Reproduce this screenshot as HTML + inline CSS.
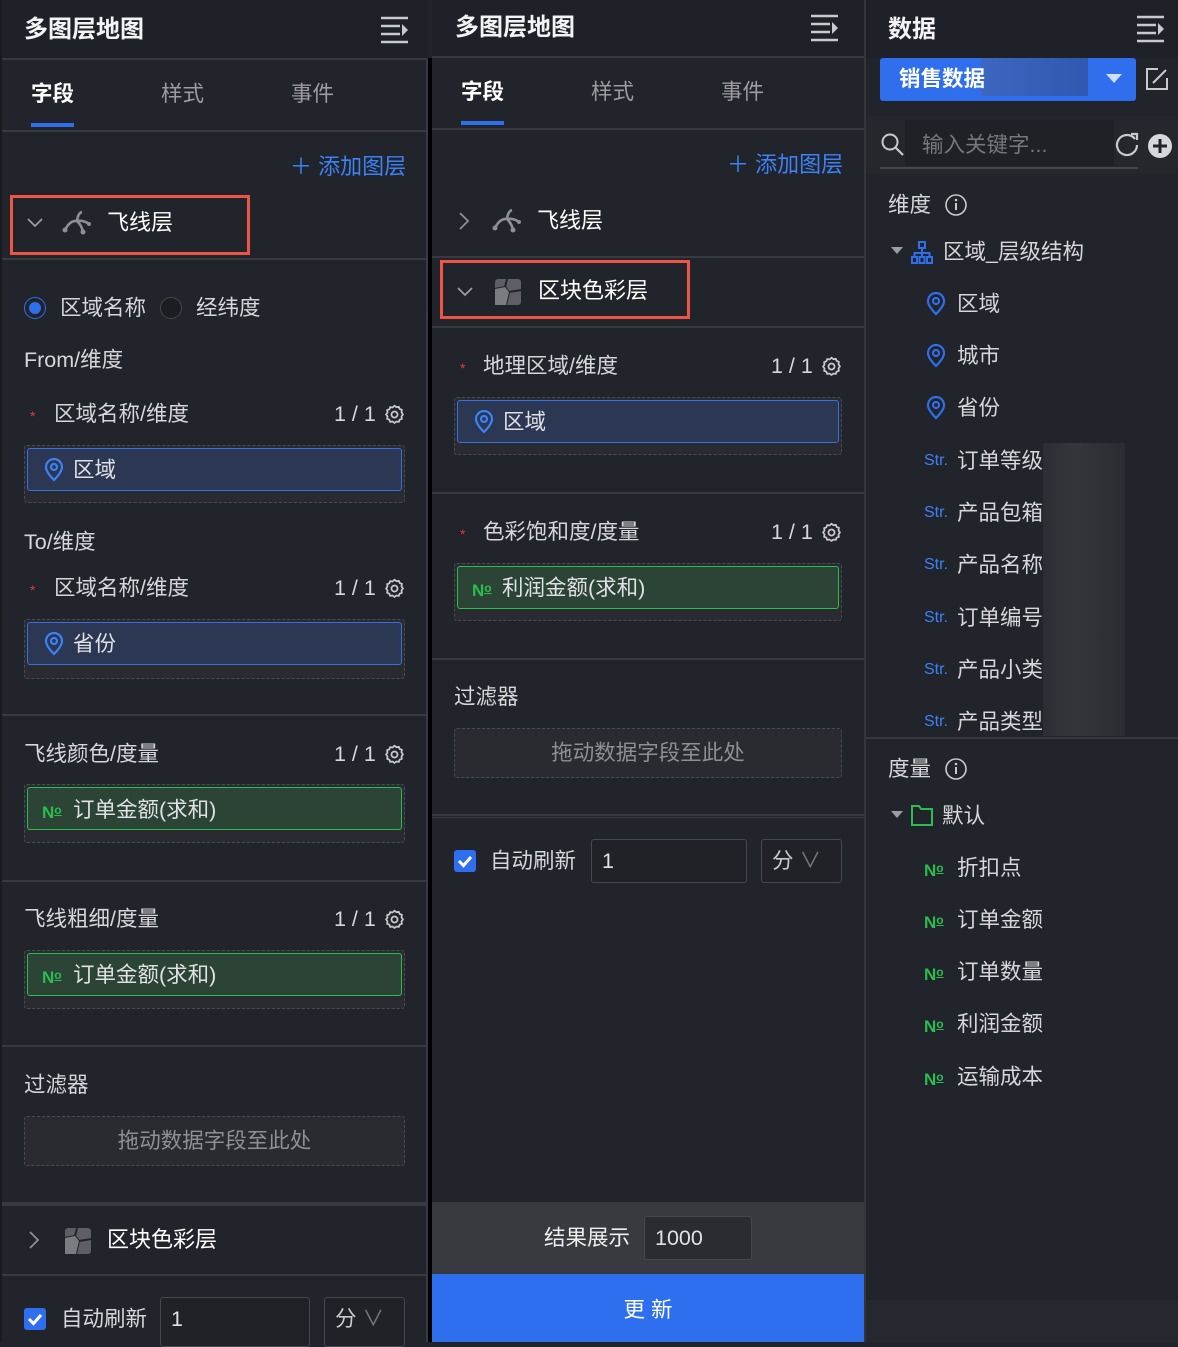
<!DOCTYPE html>
<html><head><meta charset="utf-8">
<style>
*{margin:0;padding:0;box-sizing:border-box}
body{width:1178px;height:1342px;background:#22242b;position:relative;overflow:hidden;font-family:"Liberation Sans","Noto Sans CJK SC",sans-serif;color:#d6d7da;font-size:21.5px}
.a{position:absolute}
.t{position:absolute;line-height:28px;white-space:nowrap}
.hd{position:absolute;top:0;height:58px;background:#1f2128}
.ln{position:absolute;height:2px;background:#383a41}
.w{color:#f2f3f5;font-size:24px;font-weight:bold}
.tab{font-size:21.5px;color:#9b9da2}
.tab.on{color:#fff;font-weight:bold}
.ul{position:absolute;height:4px;background:#2f6fed}
.dz{position:absolute;border:1px dashed #4a4c52;background:#2a2b30;border-radius:3px}
.pill{position:absolute;border-radius:3px;height:43px}
.pb{background:#2c3754;border:1.5px solid #3570e6}
.pg{background:#2c4436;border:1.5px solid #2bbd4f}
.red{color:#e23b3b;font-size:14px}
.drop{position:absolute;border:1px dashed #4a4c52;background:#2a2b30;border-radius:3px;color:#8d8f94;text-align:center;line-height:48px}
.inp{position:absolute;border:1px solid #46484e;border-radius:3px;background:#202227;color:#e0e1e4;padding-left:10px;line-height:42px}
.cb{position:absolute;width:22px;height:22px;background:#2f6fed;border-radius:3px}
.no{color:#2bbd4f;font-weight:bold;font-size:17px}
.no i{font-style:normal;font-size:12px;text-decoration:underline;vertical-align:4px}
.str{color:#3b82f6;font-size:16px}
.blue{color:#3b82f6}
</style></head><body>

<!-- Column 1 -->
<div class="a" style="left:0;top:0;width:2px;height:1342px;background:#1a1b20"></div>
<div class="hd" style="left:2px;width:426px"></div>
<div class="a" style="left:426px;top:58px;width:2px;height:1284px;background:#383a41"></div>
<div class="a" style="left:428px;top:58px;width:4px;height:1284px;background:#000"></div>
<div class="t w" style="left:24px;top:16px">多图层地图</div>
<svg class="a" style="left:380px;top:16px" width="30" height="28" viewBox="0 0 30 28"><g stroke="#c9cacd" stroke-width="2.5"><line x1="1" y1="2" x2="28" y2="2"/><line x1="1" y1="10" x2="20" y2="10"/><line x1="1" y1="18" x2="20" y2="18"/><line x1="1" y1="26" x2="28" y2="26"/></g><path d="M22 8 L28 14 L22 20Z" fill="#c9cacd"/></svg>
<div class="ln" style="left:2px;top:58px;width:426px"></div>
<div class="t tab on" style="left:31px;top:80px">字段</div>
<div class="t tab" style="left:161px;top:80px">样式</div>
<div class="t tab" style="left:291px;top:80px">事件</div>
<div class="ul" style="left:31px;top:123px;width:43px"></div>
<div class="ln" style="left:2px;top:130px;width:426px"></div>
<div class="t blue" style="left:290px;top:153px;font-size:22px">＋ 添加图层</div>
<div class="a" style="left:10px;top:195px;width:240px;height:60px;border:3px solid #ee5544"></div>
<svg class="a" style="left:26px;top:214px" width="18" height="18"><path d="M2 5 L9 12 L16 5" stroke="#9b9da2" stroke-width="1.8" fill="none"/></svg>
<svg class="a" style="left:62px;top:208px" width="32" height="28" viewBox="0 0 32 28"><path d="M3 22 Q8 12 15 13" stroke="#8d8f94" stroke-width="2.6" fill="none"/><path d="M15 13 Q16 5 20 4" stroke="#8d8f94" stroke-width="2.6" fill="none"/><path d="M15 13 Q22 12 27 16" stroke="#8d8f94" stroke-width="2.6" fill="none"/><path d="M15 13 Q20 18 21 24" stroke="#8d8f94" stroke-width="2.6" fill="none"/><circle cx="3" cy="22" r="2.5" fill="#8d8f94"/><circle cx="21" cy="24" r="2.5" fill="#8d8f94"/><circle cx="27" cy="16" r="2" fill="#8d8f94"/></svg>
<div class="t" style="left:107px;top:209px;color:#fff;font-size:22px">飞线层</div>
<div class="ln" style="left:2px;top:258px;width:426px"></div>

<div class="a" style="left:24px;top:297px;width:22px;height:22px;border:1.5px solid #2f6fed;border-radius:50%"></div>
<div class="a" style="left:29px;top:302px;width:12px;height:12px;background:#2f6fed;border-radius:50%"></div>
<div class="t" style="left:60px;top:294px">区域名称</div>
<div class="a" style="left:160px;top:297px;width:22px;height:22px;border:1.5px solid #45474d;border-radius:50%;background:#1c1d21"></div>
<div class="t" style="left:196px;top:294px">经纬度</div>
<div class="t" style="left:24px;top:346px">From/维度</div>
<div class="t red" style="left:30px;top:402px">*</div>
<div class="t" style="left:54px;top:400px">区域名称/维度</div>
<div class="t" style="left:334px;top:400px">1 / 1</div>
<svg class="a" style="left:384px;top:404px" width="21" height="21" viewBox="0 0 24 24"><path d="M12 2l2.2 1.6 2.7-.4 1 2.5 2.5 1-.4 2.7L21.6 12l-1.6 2.2.4 2.7-2.5 1-1 2.5-2.7-.4L12 21.6l-2.2-1.6-2.7.4-1-2.5-2.5-1 .4-2.7L2.4 12 4 9.8l-.4-2.7 2.5-1 1-2.5 2.7.4z" fill="none" stroke="#c9cacd" stroke-width="2"/><circle cx="12" cy="12" r="3.5" fill="none" stroke="#c9cacd" stroke-width="2"/></svg>
<div class="dz" style="left:24px;top:445px;width:381px;height:58px"></div>
<div class="pill pb" style="left:27px;top:448px;width:375px"></div>
<svg class="a" style="left:44px;top:458px" width="20" height="24" viewBox="0 0 20 24"><path d="M10 22 C4 16 2 12 2 9 A8 8 0 0 1 18 9 C18 12 16 16 10 22Z" fill="none" stroke="#3b82f6" stroke-width="2.2"/><circle cx="10" cy="9" r="3" fill="none" stroke="#3b82f6" stroke-width="2.2"/></svg>
<div class="t" style="left:73px;top:456px;color:#e0e1e4">区域</div>

<div class="t" style="left:24px;top:528px">To/维度</div>
<div class="t red" style="left:30px;top:576px">*</div>
<div class="t" style="left:54px;top:574px">区域名称/维度</div>
<div class="t" style="left:334px;top:574px">1 / 1</div>
<svg class="a" style="left:384px;top:578px" width="21" height="21" viewBox="0 0 24 24"><path d="M12 2l2.2 1.6 2.7-.4 1 2.5 2.5 1-.4 2.7L21.6 12l-1.6 2.2.4 2.7-2.5 1-1 2.5-2.7-.4L12 21.6l-2.2-1.6-2.7.4-1-2.5-2.5-1 .4-2.7L2.4 12 4 9.8l-.4-2.7 2.5-1 1-2.5 2.7.4z" fill="none" stroke="#c9cacd" stroke-width="2"/><circle cx="12" cy="12" r="3.5" fill="none" stroke="#c9cacd" stroke-width="2"/></svg>
<div class="dz" style="left:24px;top:619px;width:381px;height:60px"></div>
<div class="pill pb" style="left:27px;top:622px;width:375px"></div>
<svg class="a" style="left:44px;top:632px" width="20" height="24" viewBox="0 0 20 24"><path d="M10 22 C4 16 2 12 2 9 A8 8 0 0 1 18 9 C18 12 16 16 10 22Z" fill="none" stroke="#3b82f6" stroke-width="2.2"/><circle cx="10" cy="9" r="3" fill="none" stroke="#3b82f6" stroke-width="2.2"/></svg>
<div class="t" style="left:73px;top:630px;color:#e0e1e4">省份</div>
<div class="ln" style="left:2px;top:714px;width:426px"></div>

<div class="t" style="left:24px;top:740px">飞线颜色/度量</div>
<div class="t" style="left:334px;top:740px">1 / 1</div>
<svg class="a" style="left:384px;top:744px" width="21" height="21" viewBox="0 0 24 24"><path d="M12 2l2.2 1.6 2.7-.4 1 2.5 2.5 1-.4 2.7L21.6 12l-1.6 2.2.4 2.7-2.5 1-1 2.5-2.7-.4L12 21.6l-2.2-1.6-2.7.4-1-2.5-2.5-1 .4-2.7L2.4 12 4 9.8l-.4-2.7 2.5-1 1-2.5 2.7.4z" fill="none" stroke="#c9cacd" stroke-width="2"/><circle cx="12" cy="12" r="3.5" fill="none" stroke="#c9cacd" stroke-width="2"/></svg>
<div class="dz" style="left:24px;top:784px;width:381px;height:59px"></div>
<div class="pill pg" style="left:27px;top:787px;width:375px"></div>
<div class="t no" style="left:42px;top:796px">N<i>o</i></div>
<div class="t" style="left:73px;top:796px;color:#e0e1e4">订单金额(求和)</div>
<div class="ln" style="left:2px;top:880px;width:426px"></div>

<div class="t" style="left:24px;top:905px">飞线粗细/度量</div>
<div class="t" style="left:334px;top:905px">1 / 1</div>
<svg class="a" style="left:384px;top:909px" width="21" height="21" viewBox="0 0 24 24"><path d="M12 2l2.2 1.6 2.7-.4 1 2.5 2.5 1-.4 2.7L21.6 12l-1.6 2.2.4 2.7-2.5 1-1 2.5-2.7-.4L12 21.6l-2.2-1.6-2.7.4-1-2.5-2.5-1 .4-2.7L2.4 12 4 9.8l-.4-2.7 2.5-1 1-2.5 2.7.4z" fill="none" stroke="#c9cacd" stroke-width="2"/><circle cx="12" cy="12" r="3.5" fill="none" stroke="#c9cacd" stroke-width="2"/></svg>
<div class="dz" style="left:24px;top:950px;width:381px;height:59px"></div>
<div class="pill pg" style="left:27px;top:953px;width:375px"></div>
<div class="t no" style="left:42px;top:961px">N<i>o</i></div>
<div class="t" style="left:73px;top:961px;color:#e0e1e4">订单金额(求和)</div>
<div class="ln" style="left:2px;top:1045px;width:426px"></div>

<div class="t" style="left:24px;top:1071px">过滤器</div>
<div class="drop" style="left:24px;top:1116px;width:381px;height:50px">拖动数据字段至此处</div>
<div class="a" style="left:2px;top:1202px;width:426px;height:4px;background:#383a41"></div>
<svg class="a" style="left:26px;top:1230px" width="16" height="20"><path d="M4 2 L12 10 L4 18" stroke="#8d8f94" stroke-width="1.8" fill="none"/></svg>
<svg class="a" style="left:64px;top:1227px" width="28" height="28" viewBox="0 0 28 28"><rect x="1" y="1" width="26" height="26" rx="3" fill="#5d5f64"/><path d="M13 1 L11 9 L1 11 M11 9 L15 14 L12 27 M15 14 L27 12" stroke="#22242b" stroke-width="2" fill="none"/><path d="M1 11 L11 9 L15 14 L12 27 L1 27Z" fill="#7a7c81"/></svg>
<div class="t" style="left:107px;top:1226px;color:#fff;font-size:22px">区块色彩层</div>
<div class="ln" style="left:2px;top:1274px;width:426px"></div>
<div class="cb" style="left:24px;top:1308px"></div>
<svg class="a" style="left:24px;top:1308px" width="22" height="22"><path d="M5 11 L9.5 15.5 L17 7" stroke="#fff" stroke-width="3" fill="none"/></svg>
<div class="t" style="left:61px;top:1305px">自动刷新</div>
<div class="inp" style="left:160px;top:1297px;width:150px;height:50px">1</div>
<div class="inp" style="left:324px;top:1297px;width:81px;height:50px;color:#c9cacd">分 <span style="color:#777">∨</span></div>

<!-- Column 2 -->
<div class="hd" style="left:432px;width:432px;height:56px"></div>
<div class="a" style="left:864px;top:0;width:2px;height:1342px;background:#34363c"></div>
<div class="t w" style="left:455px;top:14px">多图层地图</div>
<svg class="a" style="left:810px;top:14px" width="30" height="28" viewBox="0 0 30 28"><g stroke="#c9cacd" stroke-width="2.5"><line x1="1" y1="2" x2="28" y2="2"/><line x1="1" y1="10" x2="20" y2="10"/><line x1="1" y1="18" x2="20" y2="18"/><line x1="1" y1="26" x2="28" y2="26"/></g><path d="M22 8 L28 14 L22 20Z" fill="#c9cacd"/></svg>
<div class="ln" style="left:432px;top:56px;width:432px"></div>
<div class="t tab on" style="left:461px;top:78px">字段</div>
<div class="t tab" style="left:591px;top:78px">样式</div>
<div class="t tab" style="left:721px;top:78px">事件</div>
<div class="ul" style="left:461px;top:121px;width:43px"></div>
<div class="ln" style="left:432px;top:128px;width:432px"></div>
<div class="t blue" style="left:727px;top:151px;font-size:22px">＋ 添加图层</div>
<svg class="a" style="left:456px;top:211px" width="16" height="20"><path d="M4 2 L12 10 L4 18" stroke="#8d8f94" stroke-width="1.8" fill="none"/></svg>
<svg class="a" style="left:492px;top:206px" width="32" height="28" viewBox="0 0 32 28"><path d="M3 22 Q8 12 15 13" stroke="#8d8f94" stroke-width="2.6" fill="none"/><path d="M15 13 Q16 5 20 4" stroke="#8d8f94" stroke-width="2.6" fill="none"/><path d="M15 13 Q22 12 27 16" stroke="#8d8f94" stroke-width="2.6" fill="none"/><path d="M15 13 Q20 18 21 24" stroke="#8d8f94" stroke-width="2.6" fill="none"/><circle cx="3" cy="22" r="2.5" fill="#8d8f94"/><circle cx="21" cy="24" r="2.5" fill="#8d8f94"/><circle cx="27" cy="16" r="2" fill="#8d8f94"/></svg>
<div class="t" style="left:537px;top:207px;color:#fff;font-size:22px">飞线层</div>
<div class="ln" style="left:432px;top:256px;width:432px"></div>
<div class="a" style="left:440px;top:260px;width:250px;height:59px;border:3px solid #ee5544"></div>
<svg class="a" style="left:456px;top:283px" width="18" height="18"><path d="M2 5 L9 12 L16 5" stroke="#9b9da2" stroke-width="1.8" fill="none"/></svg>
<svg class="a" style="left:494px;top:278px" width="28" height="28" viewBox="0 0 28 28"><rect x="1" y="1" width="26" height="26" rx="3" fill="#5d5f64"/><path d="M13 1 L11 9 L1 11 M11 9 L15 14 L12 27 M15 14 L27 12" stroke="#22242b" stroke-width="2" fill="none"/><path d="M1 11 L11 9 L15 14 L12 27 L1 27Z" fill="#7a7c81"/></svg>
<div class="t" style="left:538px;top:277px;color:#fff;font-size:22px">区块色彩层</div>
<div class="ln" style="left:432px;top:326px;width:432px"></div>

<div class="t red" style="left:460px;top:354px">*</div>
<div class="t" style="left:483px;top:352px">地理区域/维度</div>
<div class="t" style="left:771px;top:352px">1 / 1</div>
<svg class="a" style="left:821px;top:356px" width="21" height="21" viewBox="0 0 24 24"><path d="M12 2l2.2 1.6 2.7-.4 1 2.5 2.5 1-.4 2.7L21.6 12l-1.6 2.2.4 2.7-2.5 1-1 2.5-2.7-.4L12 21.6l-2.2-1.6-2.7.4-1-2.5-2.5-1 .4-2.7L2.4 12 4 9.8l-.4-2.7 2.5-1 1-2.5 2.7.4z" fill="none" stroke="#c9cacd" stroke-width="2"/><circle cx="12" cy="12" r="3.5" fill="none" stroke="#c9cacd" stroke-width="2"/></svg>
<div class="dz" style="left:454px;top:397px;width:388px;height:58px"></div>
<div class="pill pb" style="left:457px;top:400px;width:382px"></div>
<svg class="a" style="left:474px;top:410px" width="20" height="24" viewBox="0 0 20 24"><path d="M10 22 C4 16 2 12 2 9 A8 8 0 0 1 18 9 C18 12 16 16 10 22Z" fill="none" stroke="#3b82f6" stroke-width="2.2"/><circle cx="10" cy="9" r="3" fill="none" stroke="#3b82f6" stroke-width="2.2"/></svg>
<div class="t" style="left:503px;top:408px;color:#e0e1e4">区域</div>
<div class="ln" style="left:432px;top:492px;width:432px"></div>

<div class="t red" style="left:460px;top:520px">*</div>
<div class="t" style="left:483px;top:518px">色彩饱和度/度量</div>
<div class="t" style="left:771px;top:518px">1 / 1</div>
<svg class="a" style="left:821px;top:522px" width="21" height="21" viewBox="0 0 24 24"><path d="M12 2l2.2 1.6 2.7-.4 1 2.5 2.5 1-.4 2.7L21.6 12l-1.6 2.2.4 2.7-2.5 1-1 2.5-2.7-.4L12 21.6l-2.2-1.6-2.7.4-1-2.5-2.5-1 .4-2.7L2.4 12 4 9.8l-.4-2.7 2.5-1 1-2.5 2.7.4z" fill="none" stroke="#c9cacd" stroke-width="2"/><circle cx="12" cy="12" r="3.5" fill="none" stroke="#c9cacd" stroke-width="2"/></svg>
<div class="dz" style="left:454px;top:563px;width:388px;height:58px"></div>
<div class="pill pg" style="left:457px;top:566px;width:382px"></div>
<div class="t no" style="left:472px;top:574px">N<i>o</i></div>
<div class="t" style="left:502px;top:574px;color:#e0e1e4">利润金额(求和)</div>
<div class="ln" style="left:432px;top:658px;width:432px"></div>

<div class="t" style="left:454px;top:683px">过滤器</div>
<div class="drop" style="left:454px;top:728px;width:388px;height:50px">拖动数据字段至此处</div>
<div class="ln" style="left:432px;top:814px;width:432px"></div>
<div class="a" style="left:432px;top:817px;width:432px;height:1px;background:#383a41"></div>
<div class="cb" style="left:454px;top:850px"></div>
<svg class="a" style="left:454px;top:850px" width="22" height="22"><path d="M5 11 L9.5 15.5 L17 7" stroke="#fff" stroke-width="3" fill="none"/></svg>
<div class="t" style="left:490px;top:847px">自动刷新</div>
<div class="inp" style="left:591px;top:839px;width:156px;height:44px">1</div>
<div class="inp" style="left:761px;top:839px;width:81px;height:44px;color:#c9cacd">分 <span style="color:#777">∨</span></div>

<div class="a" style="left:432px;top:1202px;width:432px;height:72px;background:#383a40"></div>
<div class="t" style="left:544px;top:1224px;color:#eee">结果展示</div>
<div class="inp" style="left:644px;top:1216px;width:108px;height:44px;background:#2a2c31">1000</div>
<div class="a" style="left:432px;top:1274px;width:432px;height:68px;background:#2e6ff0"></div>
<div class="t" style="left:432px;top:1296px;width:432px;text-align:center;color:#fff">更 新</div>

<!-- Column 3 -->
<div class="hd" style="left:866px;width:312px"></div>
<div class="t w" style="left:888px;top:16px">数据</div>
<svg class="a" style="left:1136px;top:15px" width="30" height="28" viewBox="0 0 30 28"><g stroke="#c9cacd" stroke-width="2.5"><line x1="1" y1="2" x2="28" y2="2"/><line x1="1" y1="10" x2="20" y2="10"/><line x1="1" y1="18" x2="20" y2="18"/><line x1="1" y1="26" x2="28" y2="26"/></g><path d="M22 8 L28 14 L22 20Z" fill="#c9cacd"/></svg>
<div class="a" style="left:880px;top:58px;width:256px;height:43px;background:#2f6fed;border-radius:3px"></div>
<div class="a" style="left:981px;top:58px;width:107px;height:38px;background:linear-gradient(90deg,#3d67c0,#2f59b0)"></div>
<div class="t" style="left:899px;top:65px;color:#fff;font-weight:bold;font-size:21.5px">销售数据</div>
<svg class="a" style="left:1105px;top:73px" width="18" height="12"><path d="M1 1 L17 1 L9 10Z" fill="#cfe0ff"/></svg>
<svg class="a" style="left:1145px;top:67px" width="24" height="24"><path d="M13 2 H2 V22 H22 V11" stroke="#c9cacd" stroke-width="2" fill="none"/><path d="M8 16 L21 3" stroke="#c9cacd" stroke-width="2"/></svg>
<div class="a" style="left:866px;top:116px;width:312px;height:58px;background:#25272d"></div>
<div class="a" style="left:905px;top:120px;width:209px;height:46px;background:#1f2127"></div>
<svg class="a" style="left:880px;top:132px" width="26" height="26"><circle cx="10" cy="10" r="7.5" stroke="#c9cacd" stroke-width="2" fill="none"/><path d="M15.5 15.5 L23 23" stroke="#c9cacd" stroke-width="2.2"/></svg>
<div class="t" style="left:922px;top:131px;color:#75777c">输入关键字...</div>
<div class="a" style="left:880px;top:167px;width:258px;height:2px;background:#45474d"></div>
<svg class="a" style="left:1114px;top:131px" width="26" height="26"><path d="M21 8 A10 10 0 1 0 23 14" stroke="#c9cacd" stroke-width="2.2" fill="none"/><path d="M17 3 L23 3 L23 9" stroke="#c9cacd" stroke-width="2.2" fill="none"/></svg>
<svg class="a" style="left:1147px;top:133px" width="26" height="26"><circle cx="13" cy="13" r="12" fill="#d6d7da"/><path d="M13 6 V20 M6 13 H20" stroke="#22242b" stroke-width="3"/></svg>

<div class="t" style="left:888px;top:191px">维度</div>
<svg class="a" style="left:945px;top:194px" width="22" height="22"><circle cx="11" cy="11" r="10" stroke="#c9cacd" stroke-width="1.6" fill="none"/><path d="M11 9 V16" stroke="#c9cacd" stroke-width="2"/><circle cx="11" cy="6" r="1.3" fill="#c9cacd"/></svg>
<svg class="a" style="left:890px;top:246px" width="14" height="10"><path d="M1 1 L13 1 L7 8Z" fill="#9b9da2"/></svg>
<svg class="a" style="left:911px;top:241px" width="22" height="23" viewBox="0 0 22 23"><g stroke="#2f6fed" stroke-width="2" fill="none"><rect x="8" y="1" width="6" height="6"/><rect x="1" y="16" width="5" height="6"/><rect x="8.5" y="16" width="5" height="6"/><rect x="16" y="16" width="5" height="6"/><path d="M11 7 V12 M3.5 16 V12 H18.5 V16 M11 12 V16"/></g></svg>
<div class="t" style="left:943px;top:238px">区域_层级结构</div>
<svg class="a" style="left:926px;top:292px" width="20" height="24" viewBox="0 0 20 24"><path d="M10 22 C4 16 2 12 2 9 A8 8 0 0 1 18 9 C18 12 16 16 10 22Z" fill="none" stroke="#2f6fed" stroke-width="2.2"/><circle cx="10" cy="9" r="3" fill="none" stroke="#2f6fed" stroke-width="2.2"/></svg>
<div class="t" style="left:957px;top:290px">区域</div>
<svg class="a" style="left:926px;top:344px" width="20" height="24" viewBox="0 0 20 24"><path d="M10 22 C4 16 2 12 2 9 A8 8 0 0 1 18 9 C18 12 16 16 10 22Z" fill="none" stroke="#2f6fed" stroke-width="2.2"/><circle cx="10" cy="9" r="3" fill="none" stroke="#2f6fed" stroke-width="2.2"/></svg>
<div class="t" style="left:957px;top:342px">城市</div>
<svg class="a" style="left:926px;top:396px" width="20" height="24" viewBox="0 0 20 24"><path d="M10 22 C4 16 2 12 2 9 A8 8 0 0 1 18 9 C18 12 16 16 10 22Z" fill="none" stroke="#2f6fed" stroke-width="2.2"/><circle cx="10" cy="9" r="3" fill="none" stroke="#2f6fed" stroke-width="2.2"/></svg>
<div class="t" style="left:957px;top:394px">省份</div>
<div class="t str" style="left:924px;top:447px">Str.</div><div class="t" style="left:957px;top:447px">订单等级</div>
<div class="t str" style="left:924px;top:499px">Str.</div><div class="t" style="left:957px;top:499px">产品包箱</div>
<div class="t str" style="left:924px;top:551px">Str.</div><div class="t" style="left:957px;top:551px">产品名称</div>
<div class="t str" style="left:924px;top:604px">Str.</div><div class="t" style="left:957px;top:604px">订单编号</div>
<div class="t str" style="left:924px;top:656px">Str.</div><div class="t" style="left:957px;top:656px">产品小类</div>
<div class="t str" style="left:924px;top:708px">Str.</div><div class="t" style="left:957px;top:708px">产品类型</div>
<div class="a" style="left:1043px;top:443px;width:82px;height:293px;background:linear-gradient(90deg,#2c2e34,#34363c 40%,#2a2c32)"></div>
<div class="ln" style="left:866px;top:737px;width:312px"></div>

<div class="t" style="left:888px;top:755px">度量</div>
<svg class="a" style="left:945px;top:758px" width="22" height="22"><circle cx="11" cy="11" r="10" stroke="#c9cacd" stroke-width="1.6" fill="none"/><path d="M11 9 V16" stroke="#c9cacd" stroke-width="2"/><circle cx="11" cy="6" r="1.3" fill="#c9cacd"/></svg>
<svg class="a" style="left:890px;top:810px" width="14" height="10"><path d="M1 1 L13 1 L7 8Z" fill="#9b9da2"/></svg>
<svg class="a" style="left:911px;top:805px" width="22" height="21"><path d="M1 1 H8 L10 4 H21 V20 H1Z" stroke="#2bbd4f" stroke-width="2" fill="none"/></svg>
<div class="t" style="left:942px;top:802px">默认</div>
<div class="t no" style="left:924px;top:854px">N<i>o</i></div><div class="t" style="left:957px;top:854px">折扣点</div>
<div class="t no" style="left:924px;top:906px">N<i>o</i></div><div class="t" style="left:957px;top:906px">订单金额</div>
<div class="t no" style="left:924px;top:958px">N<i>o</i></div><div class="t" style="left:957px;top:958px">订单数量</div>
<div class="t no" style="left:924px;top:1010px">N<i>o</i></div><div class="t" style="left:957px;top:1010px">利润金额</div>
<div class="t no" style="left:924px;top:1063px">N<i>o</i></div><div class="t" style="left:957px;top:1063px">运输成本</div>
<div class="a" style="left:866px;top:1300px;width:312px;height:42px;background:#262830"></div>
</body></html>
